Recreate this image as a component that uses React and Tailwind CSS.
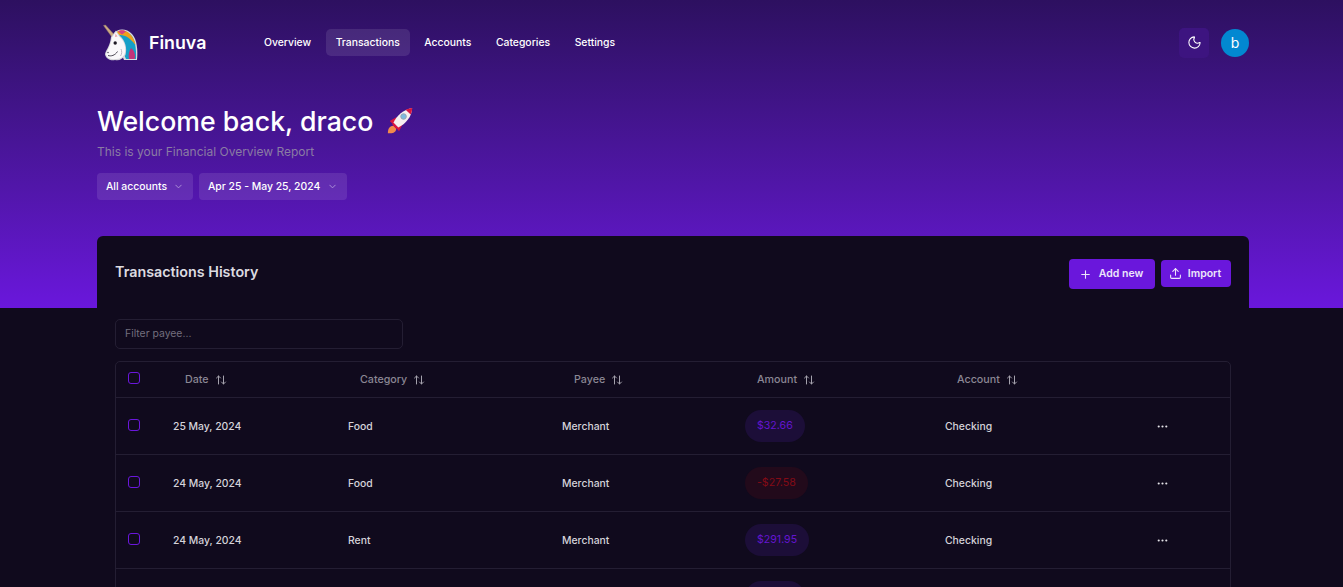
import React from "react";
import { ArrowUpDown, ChevronDown, Ellipsis, Moon, Plus, Upload } from "lucide-react";

const Unicorn = () => (
  <svg width="38" height="38" viewBox="0 0 38 38" className="shrink-0">
    <path d="M13 11 C17 4 26 4 32 10 C37 15 38 26 37 36 L24 36 Z" fill="#d9dbe0" />
    <path d="M15 10 C19 5 26 6 31 11 C35 15 36.5 25 36 35 L26 35 Z" fill="#14a0c8" />
    <path d="M15 10 C18 5 25 5 30 10 C33 13 35 17 35.5 21 C31 15 26 11 20 11 Z" fill="#efa01c" />
    <path d="M18 7.5 C21 5.5 24 6 26 7.5 L22 10.5 Z" fill="#d8417f" />
    <path d="M31 24 C34 26 36 31 34.5 35 L29 35 C28 31 29 27 31 24 Z" fill="#c2347a" />
    <path d="M3.5 1.5 L5.5 1 L14 10.5 L11.5 12.5 Z" fill="#cda982" stroke="#8c7a68" strokeWidth="0.5" />
    <path d="M11 13 L16 6.5 L20 12 C25 16 27.5 24 25.5 31 C23 35 19 37 15 36 C11 37 6 35 5 30.5 C5 27 10 23 11 13 Z" fill="#d5d5da" />
    <path d="M12 13.5 L16 8 L19.5 13 C24.5 17 26.5 24 24.5 30.5 C22 34 19 35.5 15 35 C11 35.8 7 34 6 30.5 C6.2 27.5 10.5 23 12 13.5 Z" fill="#f9f8fa" />
    <path d="M15.5 9.5 L17.5 12.5 L15 13 Z" fill="#e9a6b6" />
    <circle cx="15.2" cy="19" r="1.7" fill="#1d1a24" />
    <path d="M8 31.5 C11 32.5 15 31.5 17.5 27.5" stroke="#37333f" strokeWidth="0.9" fill="none" />
    <circle cx="8" cy="28.5" r="0.7" fill="#37333f" />
    <path d="M21 25 C22 27 22 30 20.5 32" stroke="#b9b8c2" strokeWidth="1" fill="none" />
  </svg>
);

const Rocket = () => (
  <svg width="28" height="28" viewBox="0 0 30 30" className="shrink-0">
    <path d="M2 28 C2 23 4 20 8 20 L11 23 C11 27 7 29 2 28 Z" fill="#f28a4b" />
    <path d="M4 15 L11 11 L10 21 Z" fill="#d9143f" />
    <path d="M14 26 L18 18 L9 20 Z" fill="#d9143f" />
    <path d="M8 17 C11 9 19 3 28 1 C28 10 21 18 13 22 Z" fill="#f6eef0" />
    <path d="M21 3 C23 2.2 26 1.4 28 1 C28 3.4 27.4 6 26.4 8 Z" fill="#d9143f" />
    <path d="M8 17 L13 22 L10.6 23 L6.8 19 Z" fill="#d9143f" />
    <circle cx="18.8" cy="10.2" r="3" fill="#7db8e0" stroke="#9aa3ad" strokeWidth="1" />
  </svg>
);

const nav = ["Overview", "Transactions", "Accounts", "Categories", "Settings"];
const rows = [
  ["25 May, 2024", "Food", "$32.66", false],
  ["24 May, 2024", "Food", "-$27.58", true],
  ["24 May, 2024", "Rent", "$291.95", false],
];
const heads = [
  ["Date", "w-[175px]"],
  ["Category", "w-[214px]"],
  ["Payee", "w-[183px]"],
  ["Amount", "w-[200px]"],
  ["Account", "w-[200px]"],
];

const Check = ({ className }) => (
  <span className={`block w-3 h-3 rounded-[3px] border border-[#6a17dc] ${className}`} />
);

export default function App() {
  return (
    <div className="h-screen overflow-hidden bg-[#100a1d] font-['Inter',sans-serif] text-white">
      <header className="h-[308px] bg-gradient-to-b from-[#2d1060] to-[#6a17dc] pl-[97px] pr-[94px]">
        <div className="flex items-center h-[84px] pt-[1px]">
          <div className="flex items-center gap-[11px] pl-[3px] w-[157px]">
            <Unicorn />
            <span className="text-[17.8px] font-semibold leading-none">Finuva</span>
          </div>
          <nav className="flex items-center gap-[4.5px]">
            {nav.map((n) => (
              <a
                key={n}
                className={`h-[27px] px-[10px] flex items-center rounded-[5px] text-[10.4px] font-medium ${n === "Transactions" ? "bg-white/10" : ""}`}
              >
                {n}
              </a>
            ))}
          </nav>
          <div className="ml-auto flex items-center gap-3">
            <button className="w-[30px] h-[30px] rounded-[5px] bg-[#3d1480] flex items-center justify-center">
              <Moon size={15} strokeWidth={1.7} />
            </button>
            <div className="w-7 h-7 rounded-full bg-[#0288d1] flex items-center justify-center text-[14px]">b</div>
          </div>
        </div>
        <div className="flex items-center gap-[13px] h-[36px] mt-[19px]">
          <h1 className="text-[26.7px] font-medium leading-none">Welcome back, draco</h1>
          <Rocket />
        </div>
        <p className="text-[12px] leading-4 mt-[5px] text-[#8a7ca3]">This is your Financial Overview Report</p>
        <div className="flex gap-[6px] mt-[13px]">
          <button className="h-[27px] w-[96px] px-[9px] rounded-[4px] bg-white/10 flex items-center justify-between whitespace-nowrap text-[10.4px] font-medium">
            All accounts
            <ChevronDown size={11} className="opacity-50" />
          </button>
          <button className="h-[27px] w-[148px] px-[9px] rounded-[4px] bg-white/10 flex items-center justify-between whitespace-nowrap text-[10.4px] font-medium">
            Apr 25 - May 25, 2024
            <ChevronDown size={11} className="opacity-50" />
          </button>
        </div>
      </header>

      <main className="ml-[97px] w-[1152px] -mt-[72px] rounded-t-[6px] bg-[#100a1d] px-[18px] pt-[23px]">
        <div className="flex items-start justify-between h-[60px]">
          <h2 className="text-[14.3px] font-semibold leading-[26px] text-[#dcdbe0]">Transactions History</h2>
          <div className="flex items-start gap-[6px]">
            <button className="w-[86px] h-[30px] pr-[2px] rounded-[4px] bg-[#6a17dc] flex items-center justify-center gap-[7px] text-[10.5px] font-semibold text-[#ece6fa]">
              <Plus size={13} />
              Add new
            </button>
            <button className="w-[70px] h-[27px] mt-[1px] pr-[2px] rounded-[4px] bg-[#6a17dc] flex items-center justify-center gap-[6px] text-[10.5px] font-semibold text-[#ece6fa]">
              <Upload size={13} />
              Import
            </button>
          </div>
        </div>
        <input
          placeholder="Filter payee..."
          className="block w-[288px] h-[30px] rounded-[5px] border border-[#241e33] bg-transparent px-[9px] pb-[2px] text-[10.4px] placeholder:text-[#736f7d] outline-none"
        />
        <div className="mt-3 rounded-[5px] border border-[#241e33]">
          <table className="w-full table-fixed border-collapse text-[10.4px]">
            <thead>
              <tr className="h-[35px] border-b border-[#241e33] text-[#8b8794] text-[10.7px]">
                <th className="w-[44px] pl-3 text-left font-normal"><Check className="mb-[3px]" /></th>
                {heads.map(([h, w]) => (
                  <th key={h} className={`${w} pl-[25px] pt-[1px] text-left font-medium`}>
                    <span className="flex items-center gap-[6px]">
                      {h}
                      <ArrowUpDown size={12} className="text-[#a5a2ad]" />
                    </span>
                  </th>
                ))}
                <th />
              </tr>
            </thead>
            <tbody>
              {rows.map(([date, cat, amt, neg], i) => (
                <tr key={i} className="h-[57px] border-b border-[#241e33] text-[#d5d3da]">
                  <td className="pl-3"><Check className="mb-[2px]" /></td>
                  <td className="pl-[13px] pt-[2px] font-medium">{date}</td>
                  <td className="pl-[13px] pt-[2px] font-medium">{cat}</td>
                  <td className="pl-[13px] pt-[2px] font-medium">Merchant</td>
                  <td className="pl-[13px] pt-[1px]">
                    <span className={`inline-flex items-center h-8 px-3 rounded-full text-[10.6px] ${neg ? "bg-[#220a1b] text-[#840a16]" : "bg-[#1c0e38] text-[#6415d0]"}`}>
                      {amt}
                    </span>
                  </td>
                  <td className="pl-[13px] pt-[2px] font-medium">Checking</td>
                  <td className="pl-[24px] pt-[2px]"><Ellipsis size={13} className="text-[#e4e3e8]" /></td>
                </tr>
              ))}
              <tr className="h-[57px]">
                <td />
                <td />
                <td />
                <td />
                <td className="pl-[13px]">
                  <span className="block w-[60px] h-8 rounded-full bg-[#1c0e38]" />
                </td>
                <td />
                <td />
              </tr>
            </tbody>
          </table>
        </div>
      </main>
    </div>
  );
}
